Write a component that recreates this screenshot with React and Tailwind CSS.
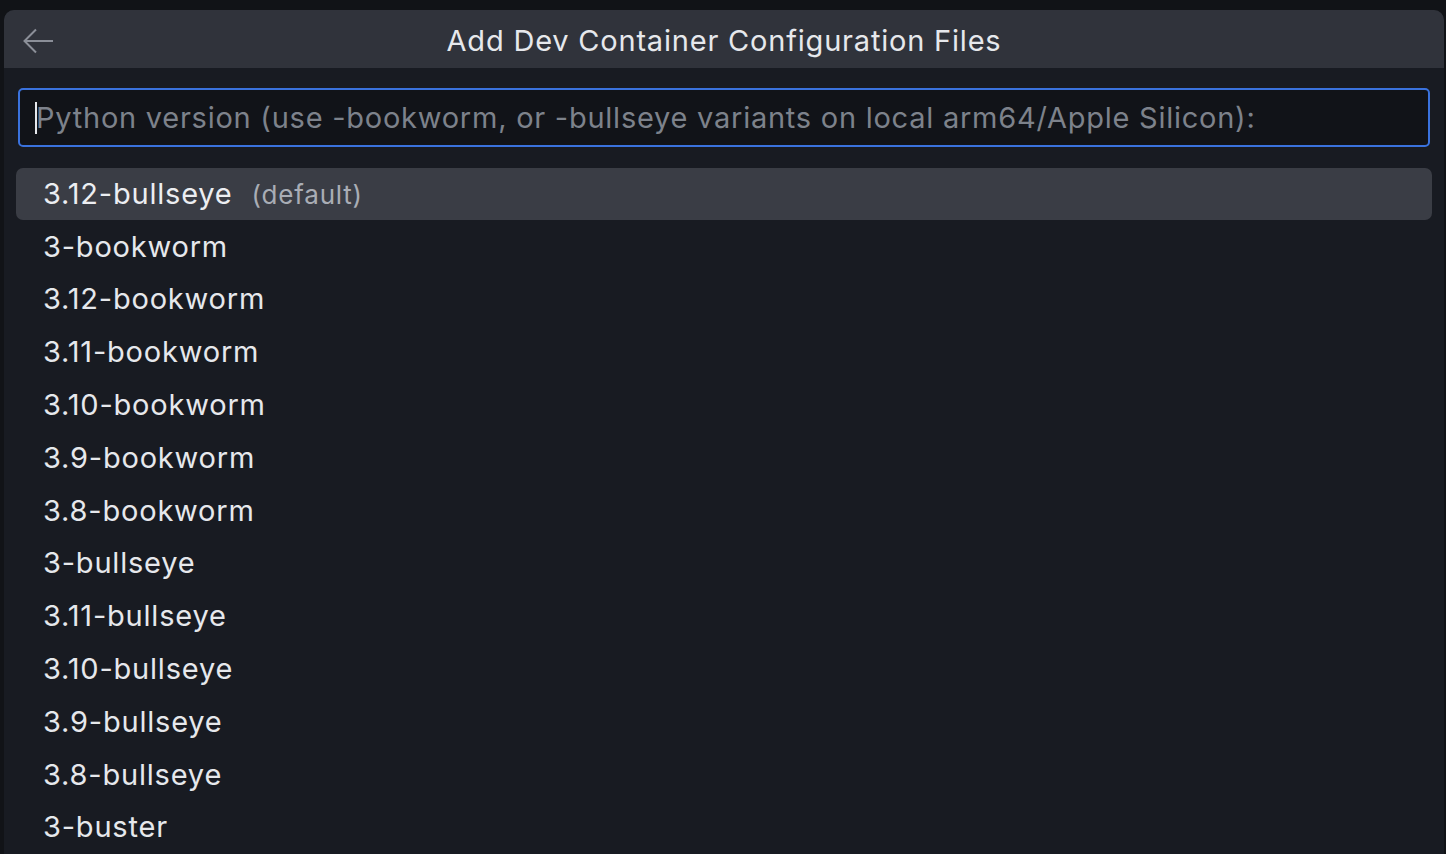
import React from "react";

const items = [
  "3-bookworm",
  "3.12-bookworm",
  "3.11-bookworm",
  "3.10-bookworm",
  "3.9-bookworm",
  "3.8-bookworm",
  "3-bullseye",
  "3.11-bullseye",
  "3.10-bullseye",
  "3.9-bullseye",
  "3.8-bullseye",
  "3-buster",
];

export default function App() {
  return (
    <div
      className="w-[1446px] h-[854px] overflow-hidden bg-[#111317] pt-[10px] pl-[4px] pr-[2px]"
      style={{ fontFamily: "Inter, 'Noto Sans', sans-serif" }}
    >
      <div className="h-[844px] rounded-t-[10px] overflow-hidden bg-[#181b22] flex flex-col">
        <div className="h-[58px] shrink-0 bg-[#30333b] relative flex items-center justify-center pt-[3px]">
          <svg
            className="absolute left-[18px] top-[16px]"
            width="34"
            height="30"
            viewBox="0 0 34 30"
            fill="none"
            stroke="#8b8f98"
            strokeWidth="2"
          >
            <path d="M31 15H3M14 3.5L2.5 15 14 26.5" />
          </svg>
          <span className="text-[29px] text-[#e6e8ec] tracking-[0.8px]">
            Add Dev Container Configuration Files
          </span>
        </div>
        <div className="px-[14px] pt-[20px]">
          <div className="h-[59px] rounded-[5px] border-2 border-[#3a72dd] bg-[#111318] flex items-center pl-[15px]">
            <span className="w-[2px] h-[32px] bg-[#e6e8ec] mr-[-1px]" />
            <span className="text-[29px] text-[#7d828b] tracking-[0.75px] whitespace-nowrap">
              Python version (use -bookworm, or -bullseye variants on local arm64/Apple Silicon):
            </span>
          </div>
        </div>
        <div className="px-[12px] pt-[21px] flex flex-col">
          <div className="h-[52px] rounded-[7px] bg-[#3a3d45] flex items-center pl-[27px] shrink-0">
            <span className="text-[29px] text-[#eceef2] tracking-[0.8px]">3.12-bullseye</span>
            <span className="text-[26px] text-[#a9adb5] tracking-[0.8px] ml-[19px]">(default)</span>
          </div>
          {items.map((t) => (
            <div key={t} className="h-[52.8px] flex items-center pl-[27px] shrink-0">
              <span className="text-[29px] text-[#e6e8ec] tracking-[0.8px]">{t}</span>
            </div>
          ))}
        </div>
      </div>
    </div>
  );
}
